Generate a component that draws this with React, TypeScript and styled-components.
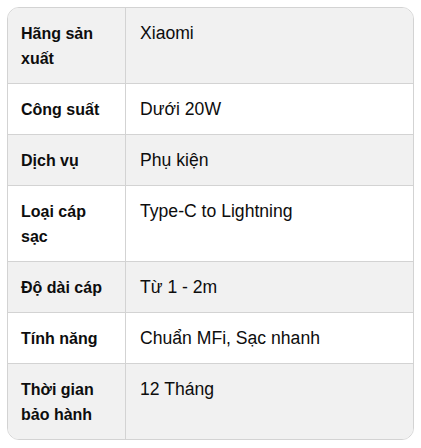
import React from "react";
import styled, { createGlobalStyle } from "styled-components";

const specs = [
  { label: "Hãng sản xuất", value: "Xiaomi" },
  { label: "Công suất", value: "Dưới 20W" },
  { label: "Dịch vụ", value: "Phụ kiện" },
  { label: "Loại cáp sạc", value: "Type-C to Lightning" },
  { label: "Độ dài cáp", value: "Từ 1 - 2m" },
  { label: "Tính năng", value: "Chuẩn MFi, Sạc nhanh" },
  { label: "Thời gian bảo hành", value: "12 Tháng" },
];

const GlobalStyle = createGlobalStyle`
  body {
    margin: 0;
    background: #fff;
    font-family: "Liberation Sans", Arial, sans-serif;
  }
`;

const Page = styled.div`
  padding: 7px;
`;

const SpecTable = styled.div`
  box-sizing: border-box;
  width: 407px;
  border: 1px solid #d3d3d3;
  border-radius: 12px;
  overflow: hidden;
  font-size: 16px;
  line-height: 25px;
  color: #0d0d0d;
`;

const Row = styled.div<{ $shaded: boolean }>`
  display: grid;
  grid-template-columns: 118px 1fr;
  background: ${({ $shaded }) => ($shaded ? "#f1f1f1" : "#fff")};
  & + & {
    border-top: 1px solid #d3d3d3;
  }
`;

const Label = styled.div`
  padding: 13px 11px 12px 13px;
  font-weight: bold;
  border-right: 1px solid #d3d3d3;
`;

const Value = styled.div`
  padding: 13px 14px 12px 14px;
  font-size: 17.6px;
`;

export default function App() {
  return (
    <Page>
      <GlobalStyle />
      <SpecTable>
        {specs.map(({ label, value }, i) => (
          <Row key={label} $shaded={i % 2 === 0}>
            <Label>{label}</Label>
            <Value>{value}</Value>
          </Row>
        ))}
      </SpecTable>
    </Page>
  );
}
